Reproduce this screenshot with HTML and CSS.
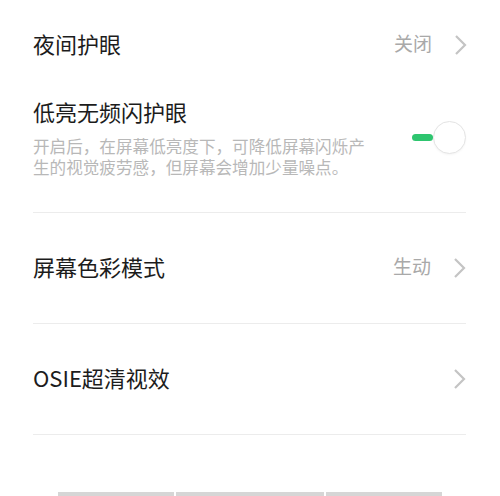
FILE: index.html
```html
<!DOCTYPE html>
<html lang="zh">
<head>
<meta charset="utf-8">
<link rel="stylesheet" href="styles.css">
</head>
<body>
<div class="page">
  <div class="row row-top">
    <span class="title">夜间护眼</span>
    <span class="value">关闭</span>
    <svg class="chev" width="14" height="22" viewBox="0 0 14 22"><path d="M2 2 L11 11 L2 20" fill="none" stroke="#c4c4c4" stroke-width="2.2"/></svg>
  </div>
  <div class="row-flicker">
    <div class="text-block">
      <div class="title">低亮无频闪护眼</div>
      <div class="desc">
        <div class="desc-line">开启后，在屏幕低亮度下，可降低屏幕闪烁产</div>
        <div class="desc-line">生的视觉疲劳感，但屏幕会增加少量噪点。</div>
      </div>
    </div>
    <div class="toggle">
      <span class="bar"></span>
      <span class="knob"></span>
    </div>
  </div>
  <div class="row row-item">
    <span class="title">屏幕色彩模式</span>
    <span class="value">生动</span>
    <svg class="chev" width="14" height="22" viewBox="0 0 14 22"><path d="M2 2 L11 11 L2 20" fill="none" stroke="#c4c4c4" stroke-width="2.2"/></svg>
  </div>
  <div class="row row-item">
    <span class="title">OSIE超清视效</span>
    <svg class="chev" width="14" height="22" viewBox="0 0 14 22"><path d="M2 2 L11 11 L2 20" fill="none" stroke="#c4c4c4" stroke-width="2.2"/></svg>
  </div>
  <div class="spacer"></div>
  <div class="tabs">
    <span class="tab t1"></span>
    <span class="tab t2"></span>
    <span class="tab t3"></span>
  </div>
</div>
</body>
</html>
```
FILE: styles.css
```css
html, body {
  margin: 0;
  padding: 0;
  background: #fff;
  overflow: hidden;
}
body {
  font-family: "Noto Sans CJK SC", "Noto Sans", sans-serif;
  color: #1c1c1c;
}
.page {
  width: 500px;
  height: 496px;
  display: flex;
  flex-direction: column;
}
.row {
  display: flex;
  align-items: center;
  margin: 0 33px 0 33px;
}
.title {
  font-size: 22px;
  line-height: 30px;
  color: #1c1c1c;
  flex: 1;
}
.row .title,
.row .value {
  margin-bottom: 4px;
}
.value {
  font-size: 19px;
  line-height: 26px;
  color: #a9a9a9;
  margin-right: 22px;
}
.chev {
  display: block;
  margin-right: -1px;
}
.row-top {
  height: 90px;
}
.row-flicker {
  margin: 0 34px 0 33px;
  padding: 6px 0 34px;
  display: flex;
  align-items: center;
  border-bottom: 1px solid #ececec;
}
.text-block {
  flex: 1;
}
.desc {
  margin-top: 10px;
  color: #b8b8b8;
}
.desc-line {
  font-size: 16.6px;
  line-height: 21px;
  white-space: nowrap;
}
.toggle {
  display: flex;
  align-items: center;
}
.bar {
  width: 21px;
  height: 7px;
  border-radius: 4px;
  background: #2ec56f;
}
.knob {
  width: 31px;
  height: 31px;
  border-radius: 50%;
  border: 1px solid #e4e4e4;
  background: #fff;
  box-shadow: 0 1px 2px rgba(0,0,0,0.04);
}
.row-item {
  height: 110px;
  border-bottom: 1px solid #ececec;
  margin-right: 34px;
}
.spacer {
  flex: 1;
}
.tabs {
  display: flex;
  gap: 2px;
  margin-left: 58px;
  height: 4px;
}
.tab {
  display: block;
  height: 4px;
  background: #d6d6d6;
}
.t1 { width: 116px; }
.t2 { width: 148px; }
.t3 { width: 116px; }
```
